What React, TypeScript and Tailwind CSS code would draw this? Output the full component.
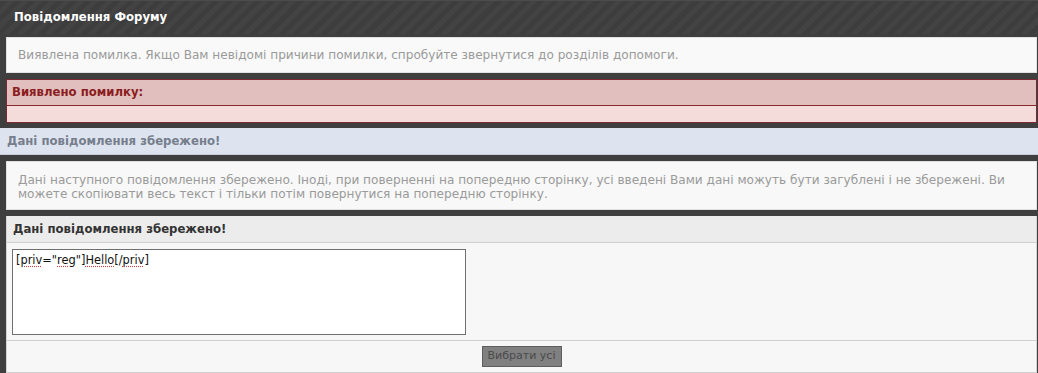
export default function App() {
  const spell = "underline decoration-dotted decoration-[#d04040] underline-offset-2";

  return (
    <div className="w-[1038px] h-[373px] overflow-hidden bg-[#3f3f3f] font-['DejaVu_Sans',sans-serif] text-[11px]">
      {/* title bar */}
      <div className="h-[34px] flex items-center px-[14px] pt-[1px] bg-[repeating-linear-gradient(135deg,#3d3d3d_0px,#3d3d3d_5px,#434343_5px,#434343_10px)] border-t border-[#4c4c4c]">
        <span className="font-bold text-white text-[11.7px]">Повідомлення Форуму</span>
      </div>

      {/* info */}
      <div className="mt-[3px] ml-[6px] mr-[1px] h-[36px] flex items-center px-[11px] pt-[1px] bg-[#f9f9f9] border border-[#e2e2e2] text-[#9a9a9a] text-[12.1px]">
        Виявлена помилка. Якщо Вам невідомі причини помилки, спробуйте звернутися до розділів допомоги.
      </div>

      {/* error box */}
      <div className="mt-[6px] ml-[6px] mr-[1px] border border-[#7a2a30]">
        <div className="h-[26px] flex items-center px-[5px] pt-[1px] bg-[#e1bfbf] border-b border-[#8a2a30] font-bold text-[#8b1c20] text-[11.7px]">
          Виявлено помилку:
        </div>
        <div className="h-[16px] bg-[#f4dcdb]" />
      </div>

      {/* saved notice bar */}
      <div className="mt-[5px] h-[27px] flex items-center px-[7px] pt-[1px] bg-[#dde4f0] border-b border-[#c5cdd9] font-bold text-[#767e8c] text-[11.7px]">
        Дані повідомлення збережено!
      </div>

      {/* saved text */}
      <div className="mt-[6px] ml-[6px] mr-[1px] h-[49px] px-[11px] pt-[12px] bg-[#f8f8f8] border border-[#e0e0e0] text-[#9a9a9a] text-[12.1px] leading-[13.5px]">
        Дані наступного повідомлення збережено. Іноді, при поверненні на попередню сторінку, усі введені Вами дані можуть бути загублені і не збережені. Ви можете скопіювати весь текст і тільки потім повернутися на попередню сторінку.
      </div>

      {/* form */}
      <div className="mt-[6px] ml-[6px] mr-[1px] bg-[#f7f7f7] border-x border-[#d4d4d4]">
        <div className="h-[27px] flex items-center px-[6px] pt-[1px] bg-[#ececec] border-b border-[#cfcfcf] font-bold text-[#333] text-[11.7px]">
          Дані повідомлення збережено!
        </div>
        <div className="pt-[6px] pb-[5px] pl-[5px] border-b border-[#cfcfcf]">
          <div className="w-[454px] h-[86px] bg-white border border-[#6f6f6f] px-[3px] py-[2px] text-[#111] text-[11.4px] leading-[16px]">
            [<span className={spell}>priv</span>="<span className={spell}>reg</span>"]<span className={spell}>Hello</span>[/<span className={spell}>priv</span>]
          </div>
        </div>
        <div className="h-[32px] flex items-center justify-center border-b border-[#cfcfcf]">
          <button className="w-[80px] h-[21px] bg-[#808080] border border-[#5e5e5e] text-[#4a4a4a] text-[11px]">
            Вибрати усі
          </button>
        </div>
      </div>
    </div>
  );
}
